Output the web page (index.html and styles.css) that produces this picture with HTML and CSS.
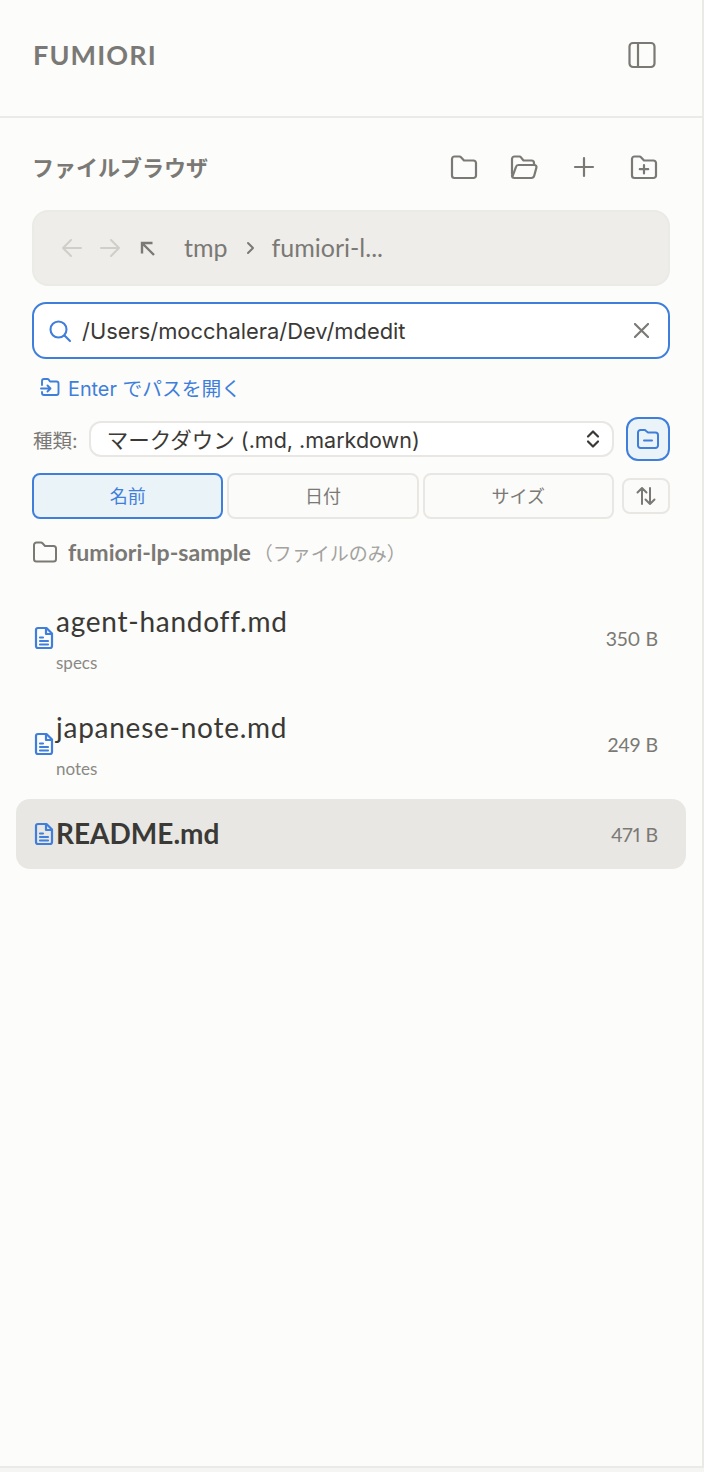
FILE: index.html
```html
<!DOCTYPE html>
<html lang="ja">
<head>
<meta charset="utf-8">
<title>Fumiori</title>
<link rel="stylesheet" href="styles.css">
</head>
<body>
<aside class="sidebar">
  <header class="top">
    <div class="brand">FUMIORI</div>
    <svg class="ico-28" viewBox="0 0 28 28"><rect x="1.5" y="2" width="25" height="24" rx="3.5"/><path d="M10 2v24"/></svg>
  </header>
  <section class="panel">
    <div class="title-row">
      <h2 class="title">ファイルブラウザ</h2>
      <div class="tools">
        <svg class="ico-28" viewBox="0 0 28 28"><path d="M4.500 25h19a2.500 2.500 0 0 0 2.500-2.500V10a2.500 2.500 0 0 0-2.500-2.500h-9.500L11 4.300a2 2 0 0 0-1.500-.8H4.500A2.500 2.500 0 0 0 2 6v16.500A2.500 2.500 0 0 0 4.500 25Z"/></svg>
        <svg class="ico-28" viewBox="0 0 28 28"><path d="M2 21V6a2.500 2.500 0 0 1 2.500-2.500h5a2 2 0 0 1 1.500.8l2.500 3.200h8A2.500 2.500 0 0 1 24 10v2"/><path d="M2.500 23.500 6 13.800a2.500 2.500 0 0 1 2.300-1.800h16.200a2 2 0 0 1 1.900 2.600l-2.200 8.200a3 3 0 0 1-2.800 2.200H4.500A2.500 2.500 0 0 1 2 22.500"/></svg>
        <svg class="ico-28" viewBox="0 0 28 28"><path d="M14 5v18M5 14h18"/></svg>
        <svg class="ico-28" viewBox="0 0 28 28"><path d="M4.500 25h19a2.500 2.500 0 0 0 2.500-2.500V10a2.500 2.500 0 0 0-2.500-2.500h-9.500L11 4.300a2 2 0 0 0-1.500-.8H4.500A2.500 2.500 0 0 0 2 6v16.500A2.500 2.500 0 0 0 4.500 25Z"/><path d="M14 12v8.500M9.800 16.200h8.400"/></svg>
      </div>
    </div>

    <nav class="crumbs">
      <svg class="ico-24 faint" viewBox="0 0 24 24"><path d="M21 12H3M11 4l-8 8 8 8"/></svg>
      <svg class="ico-24 faint" viewBox="0 0 24 24"><path d="M3 12h18M13 4l8 8-8 8"/></svg>
      <svg class="ico-up" viewBox="0 0 18 18"><path d="M3 3l12 12M3 13.500V3h10.500"/></svg>
      <span class="crumb first">tmp</span>
      <svg class="ico-sep" viewBox="0 0 12 16"><path d="m3 3 5 5-5 5"/></svg>
      <span class="crumb">fumiori-l...</span>
    </nav>

    <div class="search">
      <svg class="ico-search" viewBox="0 0 24 24"><circle cx="10.500" cy="10.500" r="8"/><path d="m16.500 16.500 5.500 5.500"/></svg>
      <span class="search-text">/Users/mocchalera/Dev/mdedit</span>
      <svg class="ico-x" viewBox="0 0 16 16"><path d="m1 1 14 14M15 1 1 15"/></svg>
    </div>

    <div class="hint">
      <svg class="ico-hint" viewBox="0 0 20 20"><path d="M2 8V4a2 2 0 0 1 2-2h3.500a1.500 1.500 0 0 1 1.200.6L10 4.500h6.500a2 2 0 0 1 2 2V16a2 2 0 0 1-2 2H4a2 2 0 0 1-2-2v-1"/><path d="M1 11.500h9.500M7.500 8.500l3 3-3 3"/></svg>
      <span>Enter でパスを開く</span>
    </div>

    <div class="type-row">
      <span class="type-label">種類:</span>
      <div class="select">
        <span class="select-text">マークダウン (.md, .markdown)</span>
        <svg class="ico-updown" viewBox="0 0 14 20"><path d="m2 7.500 5-5 5 5M2 12.500l5 5 5-5"/></svg>
      </div>
      <button class="square active" type="button">
        <svg class="ico-inner" viewBox="0 0 24 24"><path d="M4.500 21h15a2.500 2.500 0 0 0 2.500-2.500V8a2.500 2.500 0 0 0-2.500-2.500h-7.500L9.800 3.700A2 2 0 0 0 8.500 3h-4A2.500 2.500 0 0 0 2 5.500v13A2.500 2.500 0 0 0 4.500 21Z"/><path d="M8 13.500h8"/></svg>
      </button>
    </div>

    <div class="sort-row">
      <button class="sort active" type="button">名前</button>
      <button class="sort" type="button">日付</button>
      <button class="sort" type="button">サイズ</button>
      <button class="order" type="button">
        <svg class="ico-sort" viewBox="0 0 20 20"><path d="M6 18V2M1.500 6.500 6 2l4.500 4.500M14 2v16M9.500 13.500 14 18l4.500-4.500"/></svg>
      </button>
    </div>

    <div class="folder-row">
      <svg class="ico-folder" viewBox="0 0 24 22"><path d="M3.500 20.500h17a2.500 2.500 0 0 0 2.500-2.500V7.500A2.500 2.500 0 0 0 20.500 5h-8.500L9.500 2.300A2 2 0 0 0 8 1.500H3.500A2.500 2.500 0 0 0 1 4v14a2.500 2.500 0 0 0 2.500 2.500Z"/></svg>
      <span class="folder-name">fumiori-lp-sample</span>
      <span class="folder-note">（ファイルのみ）</span>
    </div>

    <ul class="files">
      <li class="file tall">
        <svg class="ico-doc" viewBox="0 0 24 24"><path d="M14.500 2H6a2 2 0 0 0-2 2v16a2 2 0 0 0 2 2h12a2 2 0 0 0 2-2V7.500Z"/><path d="M14 2.500V8h5.500M8 11.500h3M8 15h8M8 18.500h8"/></svg>
        <div class="file-main">
          <div class="file-name">agent-handoff.md</div>
          <div class="file-dir">specs</div>
        </div>
        <span class="file-size">350 B</span>
      </li>
      <li class="file tall">
        <svg class="ico-doc" viewBox="0 0 24 24"><path d="M14.500 2H6a2 2 0 0 0-2 2v16a2 2 0 0 0 2 2h12a2 2 0 0 0 2-2V7.500Z"/><path d="M14 2.500V8h5.500M8 11.500h3M8 15h8M8 18.500h8"/></svg>
        <div class="file-main">
          <div class="file-name">japanese-note.md</div>
          <div class="file-dir">notes</div>
        </div>
        <span class="file-size">249 B</span>
      </li>
      <li class="file selected">
        <svg class="ico-doc" viewBox="0 0 24 24"><path d="M14.500 2H6a2 2 0 0 0-2 2v16a2 2 0 0 0 2 2h12a2 2 0 0 0 2-2V7.500Z"/><path d="M14 2.500V8h5.500M8 11.500h3M8 15h8M8 18.500h8"/></svg>
        <div class="file-main">
          <div class="file-name">README.md</div>
        </div>
        <span class="file-size">471 B</span>
      </li>
    </ul>
  </section>
</aside>
</body>
</html>
```
FILE: styles.css
```css
* { box-sizing: border-box; }
html, body { margin: 0; padding: 0; }
body {
  background: #f5f5f3;
  font-family: "Inter", "Noto Sans CJK JP", sans-serif;
  color: #3a3936;
  width: 704px;
  height: 1472px;
  overflow: hidden;
}
svg { display: block; flex: none; fill: none; stroke: currentColor; stroke-linecap: round; stroke-linejoin: round; }

.sidebar {
  width: 704px;
  height: 1468px;
  background: #fcfcfa;
  border-right: 2px solid #eaeae7;
  border-bottom: 2px solid #eaeae7;
}

.top {
  height: 118px;
  padding: 0 46px 6px 33px;
  display: flex;
  align-items: center;
  justify-content: space-between;
  border-bottom: 2px solid #eaeae7;
  color: #7a7975;
}
.brand { font-family: "Lato", sans-serif; font-weight: 700; font-size: 27px; line-height: 30px; letter-spacing: 1.1px; }
.ico-28 { width: 28px; height: 28px; stroke-width: 2.2; color: #7a7975; }

.panel { padding: 33px 32px 0 32px; }
.title-row { display: flex; align-items: center; justify-content: space-between; height: 32px; padding-right: 12px; }
.title { margin: -2px 0 0; font-family: "Noto Sans CJK JP", sans-serif; font-size: 22px; font-weight: 700; color: #7a7975; }
.tools { display: flex; gap: 32px; }

.crumbs {
  margin-top: 27px;
  height: 76px;
  display: flex;
  align-items: center;
  padding-left: 26px;
  background: #eeede9;
  border: 2px solid #eaeae6;
  border-radius: 16px;
}
.ico-24 { width: 24px; height: 24px; stroke-width: 2; margin-right: 14px; }
.faint { color: #cfcec9; }
.ico-up { width: 18px; height: 18px; margin: 2px 0 0 3px; stroke-width: 2.4; color: #7a7975; stroke-linecap: butt; stroke-linejoin: miter; }
.crumb { font-family: "Lato", sans-serif; font-size: 25px; line-height: 30px; margin-top: -2px; color: #7a7975; }
.crumb.first { margin-left: 27px; }
.ico-sep { width: 12px; height: 16px; stroke-width: 2; color: #7a7975; margin: 0 15px 0 17px; }

.search {
  margin-top: 16px;
  height: 57px;
  display: flex;
  align-items: center;
  padding: 0 19px 0 14px;
  background: #fff;
  border: 2px solid #3f7fdb;
  border-radius: 14px;
}
.ico-search { width: 24px; height: 24px; stroke-width: 2.1; color: #3f7fdb; }
.search-text { flex: 1; margin-left: 10px; font-size: 21.9px; }
.ico-x { width: 15px; height: 15px; stroke-width: 2.3; color: #7a7975; }

.hint { margin-top: 16px; height: 24px; display: flex; align-items: center; gap: 8px; padding-left: 8px; font-size: 19.8px; color: #3f7fdb; }
.ico-hint { width: 20px; height: 20px; stroke-width: 1.9; }

.type-row { margin-top: 18px; display: flex; align-items: center; }
.type-label { flex: none; font-size: 19.5px; color: #7a7975; margin-right: 11px; padding-left: 1px; white-space: nowrap; }
.select {
  flex: 1;
  height: 36px;
  display: flex;
  align-items: center;
  justify-content: space-between;
  padding: 0 12px 0 16px;
  background: #fff;
  border: 2px solid #e8e7e3;
  border-radius: 12px;
  font-size: 21.5px;
}
.select-text { margin-top: -2px; }
.ico-updown { width: 14px; height: 20px; stroke-width: 2.2; color: #3a3936; }
.square {
  flex: none;
  margin-left: 12px;
  width: 44px;
  height: 44px;
  padding: 0;
  display: flex;
  align-items: center;
  justify-content: center;
  border: 2px solid #3f7fdb;
  border-radius: 12px;
  background: #eaf3f8;
  color: #3f7fdb;
}
.ico-inner { width: 24px; height: 24px; stroke-width: 2; }

.sort-row { margin-top: 12px; display: flex; align-items: center; gap: 4px; }
.sort {
  flex: 1;
  height: 46px;
  padding: 0 0 2px;
  border: 2px solid #e8e7e3;
  border-radius: 8px;
  background: #fbfbf9;
  font-family: "Inter", "Noto Sans CJK JP", sans-serif;
  font-size: 18px;
  color: #7a7975;
}
.sort.active { border-color: #3f7fdb; background: #eaf3f8; color: #3f7fdb; }
.order {
  flex: none;
  margin-left: 4px;
  width: 48px;
  height: 36px;
  padding: 0;
  display: flex;
  align-items: center;
  justify-content: center;
  border: 2px solid #e8e7e3;
  border-radius: 8px;
  background: #fbfbf9;
  color: #7a7975;
}
.ico-sort { width: 20px; height: 20px; stroke-width: 2; }

.folder-row { margin-top: 18px; height: 30px; display: flex; align-items: center; padding-left: 1px; color: #7a7975; }
.ico-folder { width: 24px; height: 22px; stroke-width: 2; }
.folder-name { margin-left: 11px; font-family: "Lato", sans-serif; font-weight: 700; font-size: 23.1px; }
.folder-note { margin-left: 3px; font-size: 19px; color: #a3a29e; }

.files { list-style: none; margin: 19px -16px 0; padding: 0; display: flex; flex-direction: column; gap: 2px; }
.file {
  height: 70px;
  display: flex;
  align-items: center;
  padding: 0 28px 0 16px;
  border-radius: 14px;
}
.file.tall { height: 104px; }
.file.selected { margin-top: 1px; background: #e8e7e3; }
.file.selected .file-name { font-weight: 700; letter-spacing: 0; margin-top: -2px; }
.ico-doc { width: 24px; height: 24px; stroke-width: 2.2; color: #3f7fdb; }
.file-main { flex: 1; }
.file-name { font-family: "Lato", sans-serif; font-size: 28px; line-height: 34px; letter-spacing: 0.75px; }
.file-dir { font-family: "Lato", sans-serif; font-size: 17px; line-height: 34px; margin-top: 8px; margin-bottom: -8px; color: #8a8985; }
.file-size { font-family: "Lato", sans-serif; font-size: 19.5px; font-variant-numeric: proportional-nums; color: #7a7975; }
```
